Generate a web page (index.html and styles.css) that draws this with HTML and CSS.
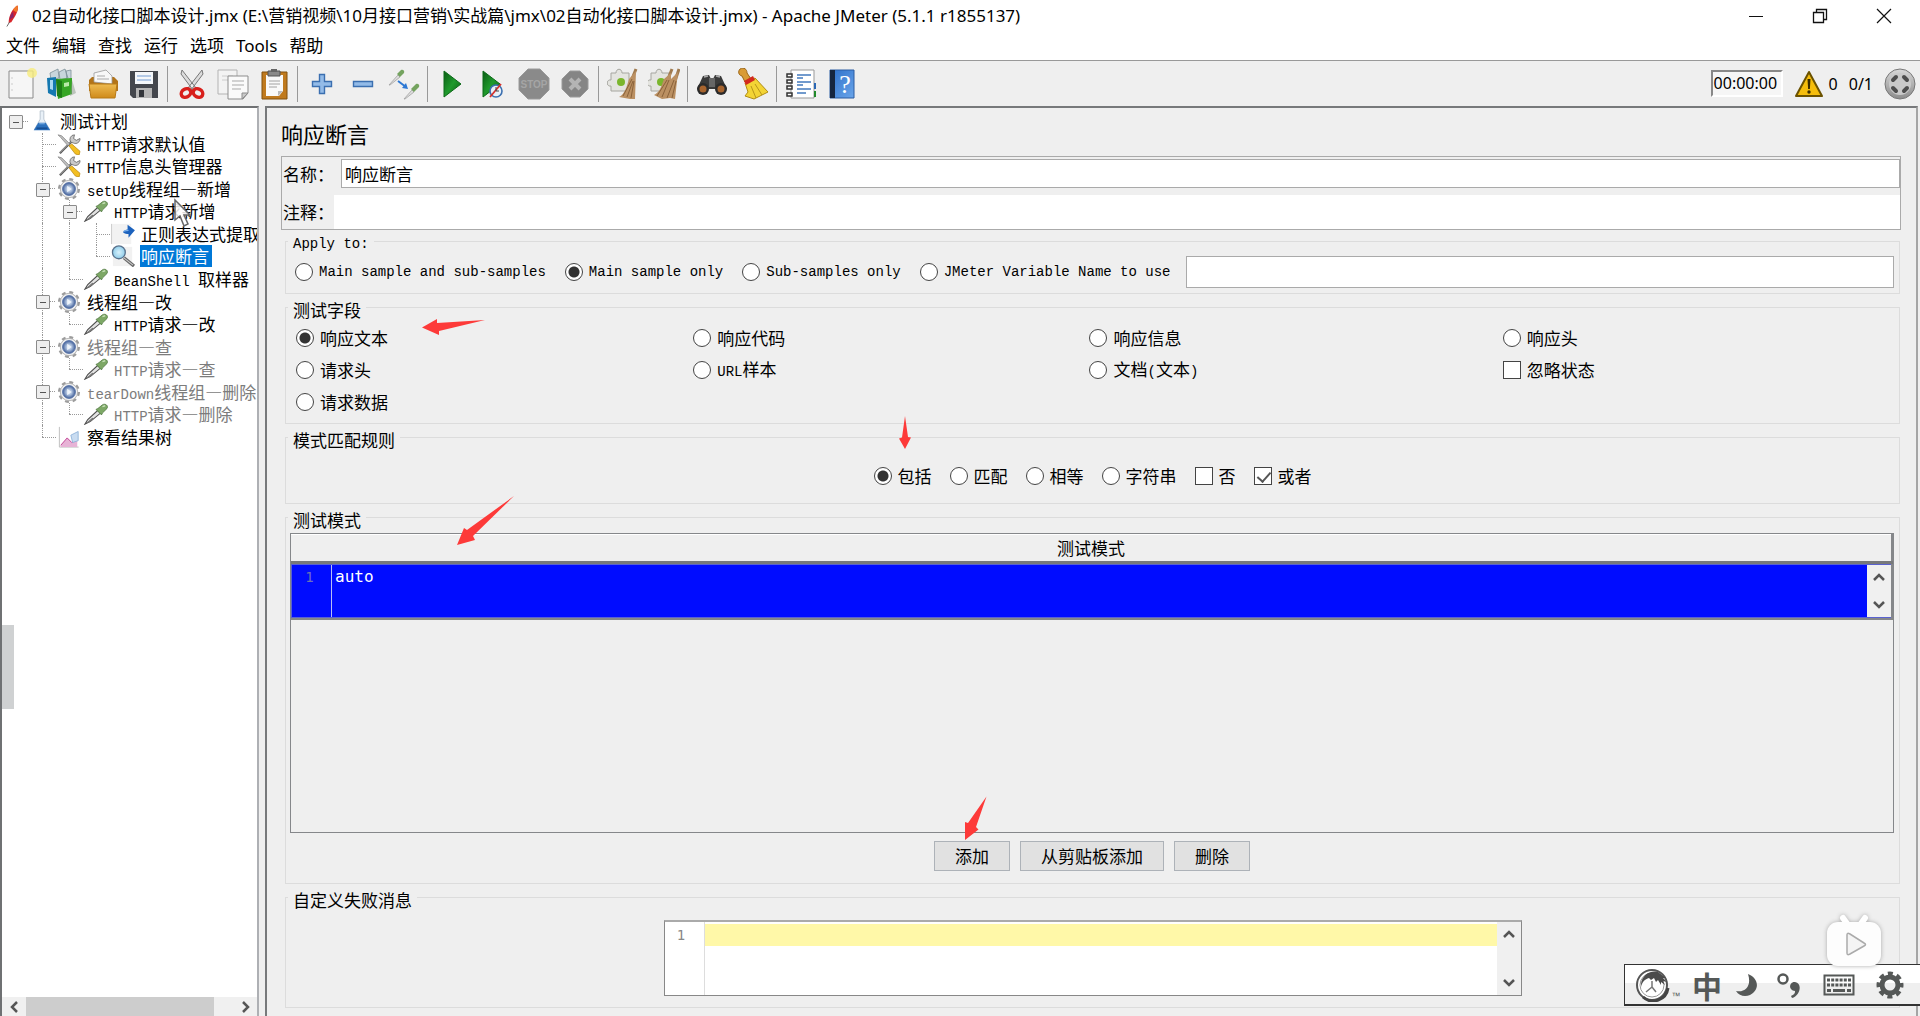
FILE: index.html
```html
<!DOCTYPE html>
<html lang="zh-CN">
<head>
<meta charset="utf-8">
<title>Apache JMeter</title>
<link rel="stylesheet" href="styles.css">
</head>
<body>
<svg class="defs" aria-hidden="true">
  <defs>
    <linearGradient id="gGreen" x1="0" y1="0" x2="1" y2="1"><stop offset="0" stop-color="#0a5c14"/><stop offset=".5" stop-color="#1f9a2c"/><stop offset="1" stop-color="#0b5a12"/></linearGradient>
    <linearGradient id="gFolder" x1="0" y1="0" x2="0" y2="1"><stop offset="0" stop-color="#eebb52"/><stop offset="1" stop-color="#cf8a1a"/></linearGradient>
    <linearGradient id="gBlue" x1="0" y1="0" x2="1" y2="1"><stop offset="0" stop-color="#2c6fc9"/><stop offset="1" stop-color="#6aa5ea"/></linearGradient>
    <linearGradient id="gSteel" x1="0" y1="0" x2="0" y2="1"><stop offset="0" stop-color="#d8d8d8"/><stop offset="1" stop-color="#8c8c8c"/></linearGradient>
    <radialGradient id="gHub"><stop offset="0" stop-color="#dfe9f5"/><stop offset=".45" stop-color="#a9bddb"/><stop offset="1" stop-color="#3e5c96"/></radialGradient>
    <radialGradient id="gLens"><stop offset="0" stop-color="#d8f1fb"/><stop offset="1" stop-color="#8fcdea"/></radialGradient>
    <symbol id="tools" viewBox="0 0 26 24">
      <path d="M3 22L16 9" stroke="#555" stroke-width="2.4"/><path d="M3 21.500L15 9.500" stroke="#bbb" stroke-width="1"/>
      <path d="M15 10a5 5 0 0 1 4-8l-1 4 3 2 4-2a5 5 0 0 1-7 5z" fill="#c9c9c9" stroke="#666" stroke-width=".9"/>
      <path d="M1 2l4 1 9 9-2 2-8-9z" fill="#bdbdbd" stroke="#777" stroke-width=".7"/>
      <path d="M13 14l3-2 9 8-1 4-4-1z" fill="#f3bf22" stroke="#b8860b" stroke-width=".8"/>
    </symbol>
    <symbol id="gear" viewBox="0 0 26 24">
      <circle cx="13" cy="12" r="10" fill="none" stroke="#9c9c9c" stroke-width="4" stroke-dasharray="4 3.850"/>
      <circle cx="13" cy="12" r="9.500" fill="#efefef" stroke="#b0b0b0"/>
      <circle cx="13" cy="12" r="7" fill="url(#gHub)" stroke="#5874a8"/>
      <path d="M11 8.500l5 3.500-5 3.500z" fill="#eef4fb"/>
    </symbol>
    <symbol id="dropper" viewBox="0 0 26 24">
      <path d="M1 23l3-5L15 8l3 3L7 20z" fill="#e3e3e3" stroke="#4e4e4e" stroke-width="1.200"/>
      <path d="M2 22l7-6 2 1-5 4z" fill="#777"/>
      <path d="M13 7l6 6 1-2 5-5c2-3-2-6-5-4l-5 4z" fill="#7da866" stroke="#48713a" stroke-width=".8"/>
      <path d="M20 4l3-1" stroke="#c5dfb6" stroke-width="1.500"/>
    </symbol>
    <symbol id="regex" viewBox="0 0 26 24">
      <path d="M0 1h22v22H0z" fill="#f2f2f2"/><path d="M.5 1v22" stroke="#c9c9c9"/>
      <path d="M13 10c1-2 3-3 5-3V2l8 6-7 8v-4c-2 0-4 0-6-2z" fill="#1c62bd"/><path d="M14 9c2-1 3-1 5-1" stroke="#7bb0ec" stroke-width="1.500" fill="none"/>
    </symbol>
    <symbol id="lens" viewBox="0 0 26 24">
      <path d="M2 2h21v21H2z" fill="#f1f1f1"/><path d="M14 14l11 9" stroke="#666" stroke-width="3.500"/><path d="M14 14l10 8" stroke="#ccc" stroke-width="1.200"/>
      <circle cx="8.500" cy="8" r="7" fill="url(#gLens)" stroke="#58718c" stroke-width="1.400"/>
    </symbol>
    <symbol id="flask" viewBox="0 0 26 24">
      <path d="M11 1h4v9l6 11H5l6-11z" fill="#e9f1f8" stroke="#b7c3cf"/>
      <path d="M9 14h8l5 8H4z" fill="#2e72bd"/><path d="M7 20h12" stroke="#174f94" stroke-width="2"/><path d="M10 15h6" stroke="#8dbbea"/>
    </symbol>
    <symbol id="chart" viewBox="0 0 26 24">
      <path d="M2.500 1v22h21" fill="none" stroke="#bbb"/><path d="M4 21l7-8 5 5 6-4v9H4z" fill="#e7b3d6"/><path d="M4 21l7-8 5 5 6-3" fill="none" stroke="#c03a8f"/>
      <path d="M15 10l8-4v10l-6 2z" fill="#c9dcf1" stroke="#90b3da"/>
    </symbol>
  </defs>
</svg>

<header class="titlebar">
  <svg class="feather" viewBox="0 0 16 26"><path d="M3 21C3 12 8 4 13 1c2 3 0 9-7 19z" fill="#d8262b"/><path d="M8 6c2-3 4-5 5-5 1 2 1 4-1 8z" fill="#f07a2a"/><path d="M4 17c0-3 2-7 4-9l1 6z" fill="#8c2468"/><path d="M1 25l3-5" stroke="#555"/></svg>
  <h1 class="titlebar-text">02自动化接口脚本设计.jmx (E:\营销视频\10月接口营销\实战篇\jmx\02自动化接口脚本设计.jmx) - Apache JMeter (5.1.1 r1855137)</h1>
  <div class="window-controls">
    <button type="button" aria-label="最小化"><svg width="16" height="16" viewBox="0 0 16 16"><path d="M1 8.500h14" stroke="#111"/></svg></button>
    <button type="button" aria-label="还原"><svg width="16" height="16" viewBox="0 0 16 16" fill="none" stroke="#111" stroke-width="1.300"><path d="M1.500 4.500h10v10h-10z"/><path d="M4.500 4.500v-3h10v10h-3"/></svg></button>
    <button type="button" aria-label="关闭"><svg width="16" height="16" viewBox="0 0 16 16"><path d="M1 1l14 14M15 1L1 15" stroke="#111" stroke-width="1.200"/></svg></button>
  </div>
</header>

<nav class="menubar">
  <a href="#">文件</a><a href="#">编辑</a><a href="#">查找</a><a href="#">运行</a><a href="#">选项</a><a href="#">Tools</a><a href="#">帮助</a>
</nav>

<div class="toolbar">
  <button type="button" aria-label="新建"><svg width="32" height="32" viewBox="0 0 32 32"><path d="M4 3h24v27H4z" fill="#f6f6f6" stroke="#8a8a8a"/><path d="M7 9v2M7 15v2M7 21v2" stroke="#ccc"/><circle cx="27" cy="5" r="5" fill="#f7ec7d" opacity=".8"/></svg></button>
  <button type="button" aria-label="模板"><svg width="32" height="32" viewBox="0 0 32 32"><path d="M4 5l8-4 1 9-8 2zM13 4l6-3 3 9-8 2zM20 3l5-1v9l-4 1z" fill="#c8d6dc" stroke="#7b8f98" stroke-width=".8"/><path d="M1 10l9-1v20l-8-4z" fill="#1478b0"/><path d="M4 12l3 0v10l-3-1z" fill="#a7d8f2"/><path d="M10 11l16-1v16l-14 5z" fill="#36a625"/><path d="M10 11l6 2v17l-5-2z" fill="#1e7f16"/><path d="M26 12l4 13-6 3z" fill="#8a9a8a" opacity=".5"/><path d="M18 15l5-1v4l-5 1z" fill="#b9eaa9"/></svg></button>
  <button type="button" aria-label="打开"><svg width="32" height="32" viewBox="0 0 32 32"><path d="M2 12l3-3h22l4 4v10H2z" fill="#b2741a"/><path d="M7 14V5l12-3 6 6v8z" fill="#f8f8f8" stroke="#999" stroke-width=".8"/><path d="M10 8h8M10 11h12" stroke="#aaa"/><path d="M2 16h28l-2 14H4z" fill="url(#gFolder)" stroke="#b87a17"/></svg></button>
  <button type="button" aria-label="保存"><svg width="32" height="32" viewBox="0 0 32 32"><path d="M2 3h28v27H5l-3-3z" fill="#44474d"/><path d="M7 4h18v12H7z" fill="#f4f7fa"/><path d="M9 8h14M9 12h14" stroke="#9dbbe0" stroke-width="1.500"/><path d="M8 20h16v10H8z" fill="#b5b5b5"/><path d="M11 22h5v7h-5z" fill="#33363b"/></svg></button>
  <span class="sep"></span>
  <button type="button" aria-label="剪切"><svg width="32" height="32" viewBox="0 0 32 32"><path d="M6 2l14 18-3 2L5 6zM26 2L12 20l3 2L27 6z" fill="#dcdcdc" stroke="#777"/><g fill="none" stroke="#d8201c" stroke-width="3.500"><ellipse cx="10" cy="25" rx="5" ry="4" transform="rotate(-30 10 25)"/><ellipse cx="22" cy="25" rx="5" ry="4" transform="rotate(30 22 25)"/></g></svg></button>
  <button type="button" aria-label="复制"><svg width="32" height="32" viewBox="0 0 32 32"><path d="M1 2h19v24H1z" fill="#f3f3f3" stroke="#b3b3b3"/><path d="M5 8h11M5 12h11" stroke="#ccc"/><path d="M11 8h20v17l-5 6H11z" fill="#fafafa" stroke="#8d8d8d"/><path d="M15 13h12M15 17h12M15 21h9" stroke="#a9a9a9"/><path d="M25 31v-6h6z" fill="#c9c9c9" stroke="#8d8d8d"/></svg></button>
  <button type="button" aria-label="粘贴"><svg width="32" height="32" viewBox="0 0 32 32"><path d="M4 4h25v27H4z" fill="#c07a1e" stroke="#81500f"/><path d="M8 7h17v16l-4 5H8z" fill="#f9f9f9"/><path d="M10 3h12v5H10z" fill="#8a8a8a" stroke="#555"/><path d="M13 1h6v3h-6z" fill="#666"/><path d="M11 13h11M11 16h11M11 19h8" stroke="#a2a2a2"/><path d="M20 28v-5h5z" fill="#bbb"/></svg></button>
  <span class="sep"></span>
  <button type="button" aria-label="展开"><svg width="32" height="32" viewBox="0 0 32 32"><path d="M13.500 6.500h5v7h7v5h-7v7h-5v-7h-7v-5h7z" fill="#93bbe8" stroke="#3b6fb0" stroke-width="1.400"/></svg></button>
  <button type="button" aria-label="折叠"><svg width="32" height="32" viewBox="0 0 32 32"><path d="M6.500 13.500h19v5h-19z" fill="#93bbe8" stroke="#3b6fb0" stroke-width="1.400"/></svg></button>
  <button type="button" aria-label="切换"><svg width="32" height="32" viewBox="0 0 32 32"><path d="M1 17l9-10 2 2-10 8z" fill="#ddd" stroke="#999" stroke-width=".7"/><path d="M9 6l4-4c2-1 4 1 3 3l-4 4z" fill="#74a35f"/><path d="M16 31l8-9 2 2-9 7z" fill="#ddd" stroke="#999" stroke-width=".7"/><path d="M23 21l5-5c2-1 4 1 3 3l-5 5z" fill="#74a35f"/><path d="M10 13l8 6" stroke="#2c78d4" stroke-width="2"/><path d="M20 21l-6-1 4-5z" fill="#2c78d4"/></svg></button>
  <span class="sep"></span>
  <button type="button" aria-label="启动"><svg width="32" height="32" viewBox="0 0 32 32"><path d="M8 3l17 13L8 29z" fill="url(#gGreen)" stroke="#0c6a18"/></svg></button>
  <button type="button" aria-label="不停顿启动"><svg width="32" height="32" viewBox="0 0 32 32"><path d="M6 3l17 13L6 29z" fill="url(#gGreen)" stroke="#0c6a18"/><circle cx="19" cy="23" r="6" fill="#e8f0f8" stroke="#3b6fb0" stroke-width="1.600"/><path d="M13 29l11-13" stroke="#d6322c" stroke-width="1.800"/><path d="M19 19v4h3" stroke="#444" fill="none"/></svg></button>
  <button type="button" aria-label="停止" disabled><svg width="32" height="32" viewBox="0 0 32 32"><path d="M10 1h12l9 9v12l-9 9H10l-9-9V10z" fill="#8a8a8a" stroke="#9a9a9a"/><text class="stop-text" x="16" y="20" text-anchor="middle">STOP</text></svg></button>
  <button type="button" aria-label="关闭" disabled><svg width="32" height="32" viewBox="0 0 32 32"><path d="M11 3h10l8 8v10l-8 8H11l-8-8V11z" fill="#858585" stroke="#9a9a9a"/><path d="M11 11l10 10M21 11L11 21" stroke="#b4b4b4" stroke-width="4"/></svg></button>
  <span class="sep"></span>
  <button type="button" aria-label="清除"><svg width="32" height="32" viewBox="0 0 32 32"><path d="M4 5h5c0-5 6-5 6 0h7v18H4v-5c-5 1-5-7 0-6z" fill="#e4e4e0" stroke="#a6a6a0"/><circle cx="14" cy="14" r="4" fill="#7bb62d"/><path d="M29 1l-6 15" stroke="#a07a4e" stroke-width="3"/><path d="M22 11l7-8-1 28-5 0-11-2c6-3 8-11 10-18z" fill="#bb9062"/><path d="M16 28l9-17M20 29l6-16M24 30l3-17" stroke="#8a623a"/></svg></button>
  <button type="button" aria-label="清除全部"><svg width="32" height="32" viewBox="0 0 32 32"><path d="M3 5h5c0-5 6-5 6 0h7v18H3v-5c-5 1-5-7 0-6z" fill="#e4e4e0" stroke="#a6a6a0"/><circle cx="13" cy="14" r="4" fill="#7bb62d"/><path d="M24 1l-6 15M31 1l-5 15" stroke="#a07a4e" stroke-width="3"/><path d="M16 11l7-6 0 6 7-7-3 27-5-1-8 1-8-4c6-3 7-8 10-16z" fill="#bb9062"/><path d="M9 28l10-16M14 29l7-17M19 30l7-18M24 30l4-17" stroke="#8a623a"/></svg></button>
  <span class="sep"></span>
  <button type="button" aria-label="查找"><svg width="32" height="32" viewBox="0 0 32 32"><path d="M1 21l6-13 6-1 2 4h2l2-4 6 1 6 13z" fill="#3a3a3a"/><path d="M13 10h6v9h-6z" fill="#666"/><circle cx="7" cy="21" r="6" fill="#2b2b2b"/><circle cx="25" cy="21" r="6" fill="#2b2b2b"/><circle cx="7" cy="21" r="3.500" fill="#a7642e"/><circle cx="25" cy="21" r="3.500" fill="#a7642e"/><path d="M8 9l4-1M20 8l4 1" stroke="#aaa" stroke-width="1.500"/></svg></button>
  <button type="button" aria-label="重置查找"><svg width="32" height="32" viewBox="0 0 32 32"><path d="M3 1c4-2 7 0 7 4l4 6-6 3-3-6c-4-1-4-5-2-7z" fill="#d99b35" stroke="#9b6516"/><path d="M8 15l10-5 13 14-14 7-9-3 3-4z" fill="#f3d435" stroke="#b08d14"/><path d="M7 13l9-5 2 4-9 5z" fill="#d22a1e"/><path d="M14 18l5 12M18 16l7 11" stroke="#b8961b"/></svg></button>
  <span class="sep"></span>
  <button type="button" aria-label="函数助手"><svg width="32" height="32" viewBox="0 0 32 32"><path d="M6 2h23v28H6z" fill="#fff" stroke="#999"/><path d="M29 15h2v6h-2z" fill="#2b68b5"/><path d="M29 23h2v6h-2z" fill="#228a2b"/><g fill="#fff" stroke="#333" stroke-width="1.500"><path d="M2 6h5v3H2zM2 12h5v3H2zM2 18h5v3H2zM2 25h5v3H2z"/></g><path d="M12 7h14M12 10h6M12 14h14M12 17h6M12 21h14M12 25h9" stroke="#4379bd" stroke-width="1.500"/></svg></button>
  <button type="button" aria-label="帮助"><svg width="32" height="32" viewBox="0 0 32 32"><path d="M4 2h24v28H4z" fill="url(#gBlue)" stroke="#2b5ca3"/><path d="M4 2h5v28H4z" fill="#16263f"/><text class="help-text" x="19" y="25" text-anchor="middle">?</text></svg></button>

  <div class="status">
    <output class="timer">00:00:00</output>
    <svg class="warn" width="30" height="28" viewBox="0 0 30 28"><path d="M15 2l13 24H2z" fill="#f5bd0c" stroke="#6b5200" stroke-width="2" stroke-linejoin="round"/><path d="M13.500 9h3l-.6 10h-1.800z" fill="#3a2c00"/><circle cx="15" cy="22" r="1.700" fill="#3a2c00"/></svg>
    <span>0</span>
    <span>0/1</span>
    <svg width="32" height="32" viewBox="0 0 32 32"><circle cx="16" cy="16" r="15" fill="url(#gSteel)" stroke="#777"/><circle cx="16" cy="16" r="11" fill="#c9c9c9"/><path d="M9 12l3-3M20 9l3 3M23 20l-3 3M12 23l-3-3" stroke="#4d4d4d" stroke-width="4" stroke-linecap="round"/></svg>
  </div>
</div>

<main class="workspace">
  <aside class="tree-pane">
    <ul class="tree">
      <li><i class="exp root"></i><svg><use href="#flask"/></svg><span>测试计划</span></li>
      <li><i></i><i class="tee"></i><svg><use href="#tools"/></svg><span><b>HTTP</b>请求默认值</span></li>
      <li><i></i><i class="tee"></i><svg><use href="#tools"/></svg><span><b>HTTP</b>信息头管理器</span></li>
      <li><i></i><i class="exp bar"></i><svg><use href="#gear"/></svg><span><b>setUp</b>线程组—新增</span></li>
      <li><i></i><i class="bar"></i><i class="exp bar"></i><svg><use href="#dropper"/></svg><span><b>HTTP</b>请求新增</span></li>
      <li><i></i><i class="bar"></i><i class="bar"></i><i class="tee"></i><svg><use href="#regex"/></svg><span>正则表达式提取</span></li>
      <li><i></i><i class="bar"></i><i class="bar"></i><i class="end"></i><svg><use href="#lens"/></svg><span class="selected">响应断言</span></li>
      <li><i></i><i class="bar"></i><i class="end"></i><svg><use href="#dropper"/></svg><span><b>BeanShell </b>取样器</span></li>
      <li><i></i><i class="exp bar"></i><svg><use href="#gear"/></svg><span>线程组—改</span></li>
      <li><i></i><i class="bar"></i><i class="end"></i><svg><use href="#dropper"/></svg><span><b>HTTP</b>请求—改</span></li>
      <li class="off"><i></i><i class="exp bar"></i><svg><use href="#gear"/></svg><span>线程组—查</span></li>
      <li class="off"><i></i><i class="bar"></i><i class="end"></i><svg><use href="#dropper"/></svg><span><b>HTTP</b>请求—查</span></li>
      <li class="off"><i></i><i class="exp bar"></i><svg><use href="#gear"/></svg><span><b>tearDown</b>线程组—删除</span></li>
      <li class="off"><i></i><i class="bar"></i><i class="end"></i><svg><use href="#dropper"/></svg><span><b>HTTP</b>请求—删除</span></li>
      <li><i></i><i class="end"></i><svg><use href="#chart"/></svg><span>察看结果树</span></li>
    </ul>
    <div class="hscroll">
      <button type="button" aria-label="向左"><svg width="9" height="12" viewBox="0 0 9 12"><path d="M7 1L2 6l5 5" fill="none" stroke="#555" stroke-width="2.500"/></svg></button>
      <div class="hscroll-track"><div class="hscroll-thumb"></div></div>
      <button type="button" aria-label="向右"><svg width="9" height="12" viewBox="0 0 9 12"><path d="M2 1l5 5-5 5" fill="none" stroke="#555" stroke-width="2.500"/></svg></button>
    </div>
    <div class="edge-handle"></div>
  </aside>

  <section class="editor-pane">
    <h2>响应断言</h2>
    <div class="name-box">
      <div class="name-row"><label for="name">名称：</label><input id="name" class="name-input" type="text" value="响应断言"></div>
      <div class="comment-row"><label for="comment">注释：</label><input id="comment" type="text"></div>
    </div>

    <fieldset>
      <legend class="latin">Apply to:</legend>
      <div class="apply latin">
        <label><input type="radio" name="apply">Main sample and sub-samples</label>
        <label><input type="radio" name="apply" checked>Main sample only</label>
        <label><input type="radio" name="apply">Sub-samples only</label>
        <label><input type="radio" name="apply">JMeter Variable Name to use</label>
        <input type="text" class="var-input" aria-label="JMeter Variable Name">
      </div>
    </fieldset>

    <fieldset>
      <legend>测试字段</legend>
      <div class="fields">
        <label><input type="radio" name="field" checked>响应文本</label>
        <label><input type="radio" name="field">响应代码</label>
        <label><input type="radio" name="field">响应信息</label>
        <label><input type="radio" name="field">响应头</label>
        <label><input type="radio" name="field">请求头</label>
        <label><input type="radio" name="field"><span><b>URL</b>样本</span></label>
        <label><input type="radio" name="field"><span>文档<b>(</b>文本<b>)</b></span></label>
        <label><input type="checkbox">忽略状态</label>
        <label><input type="radio" name="field">请求数据</label>
      </div>
    </fieldset>

    <fieldset>
      <legend>模式匹配规则</legend>
      <div class="rules">
        <label><input type="radio" name="rule" checked>包括</label>
        <label><input type="radio" name="rule">匹配</label>
        <label><input type="radio" name="rule">相等</label>
        <label><input type="radio" name="rule">字符串</label>
        <label><input type="checkbox">否</label>
        <label><input type="checkbox" checked>或者</label>
      </div>
    </fieldset>

    <fieldset class="grow">
      <legend>测试模式</legend>
      <div class="patterns">
        <div class="table-wrap">
          <table>
            <thead><tr><th>测试模式</th></tr></thead>
            <tbody><tr><td>
              <div class="code selected-code">
                <span class="gutter">1</span>
                <textarea aria-label="测试模式 1">auto</textarea>
                <div class="vscroll"><button type="button" aria-label="向上"><svg width="12" height="9" viewBox="0 0 12 9"><path d="M1 7l5-5 5 5" fill="none" stroke="#555" stroke-width="2.500"/></svg></button><button type="button" aria-label="向下"><svg width="12" height="9" viewBox="0 0 12 9"><path d="M1 2l5 5 5-5" fill="none" stroke="#555" stroke-width="2.500"/></svg></button></div>
              </div>
            </td></tr></tbody>
          </table>
        </div>
        <div class="actions">
          <button type="button">添加</button>
          <button type="button">从剪贴板添加</button>
          <button type="button">删除</button>
        </div>
      </div>
    </fieldset>

    <fieldset>
      <legend>自定义失败消息</legend>
      <div class="message">
        <div class="code message-code">
          <span class="gutter">1</span>
          <textarea aria-label="自定义失败消息"></textarea>
          <div class="vscroll"><button type="button" aria-label="向上"><svg width="12" height="9" viewBox="0 0 12 9"><path d="M1 7l5-5 5 5" fill="none" stroke="#555" stroke-width="2.500"/></svg></button><button type="button" aria-label="向下"><svg width="12" height="9" viewBox="0 0 12 9"><path d="M1 2l5 5 5-5" fill="none" stroke="#555" stroke-width="2.500"/></svg></button></div>
        </div>
      </div>
    </fieldset>
  </section>
</main>

<svg class="annotations" width="1000" height="860" viewBox="0 0 1000 860" aria-hidden="true">
  <g fill="#fd3a39">
    <path d="M422 327.500L437 319v4l48-3-46 11v4z"/>
    <path d="M905 416l3 21 3 .5-6 11.500-6-10.500 3-1z"/>
    <path d="M514 496l-41 40 2 4-18 5 7-17 3 2z"/>
    <path d="M986.500 796.500L976 827l2.500 2.500L965 840v-18l3 1z"/>
  </g>
  <path d="M175 200v20l5-4 4 10 4-2-4-9h6z" fill="#fff" fill-opacity=".85" stroke="#666" stroke-width="1.500"/>
</svg>

<div class="ime">
  <button type="button" class="ime-logo" aria-label="输入法"><svg width="38" height="34" viewBox="0 0 38 34"><circle cx="18" cy="17" r="15" fill="#fff" stroke="#555" stroke-width="2"/><circle cx="18" cy="17" r="12" fill="none" stroke="#999"/><path d="M9 29a15 15 0 0 0 25-9" fill="none" stroke="#444" stroke-width="3"/><path d="M7 16C8 8 15 2 24 4l8 6-3 0 4 4-4-1 2 4-4-3 0 3-3-5-2 2-2-4-3 2-2-2c-4 1-7 4-8 9z" fill="#4b4b4b"/><path d="M12 24l6-5v-6M18 19l4 5" fill="none" stroke="#777" stroke-width="1.500"/></svg><small>™</small></button>
  <button type="button" class="ime-lang">中</button>
  <button type="button" class="ime-moon" aria-label="半角"><svg width="24" height="24" viewBox="0 0 24 24"><path d="M13 1c11 4 12 16 2 21-5 2-11 1-14-4 9 2 16-5 12-17z" fill="#555857"/></svg></button>
  <button type="button" class="ime-punct" aria-label="标点"><svg width="26" height="26" viewBox="0 0 26 26"><circle cx="7" cy="7" r="4.500" fill="none" stroke="#555857" stroke-width="2.500"/><path d="M15 24c4-2 4-3 4-5-8-1-5-10 0-9 8 1 5 14-3 16z" fill="#555857"/></svg></button>
  <button type="button" class="ime-keys" aria-label="软键盘"><svg width="32" height="22" viewBox="0 0 32 22"><path d="M1.500 1.500h29v19h-29z" fill="none" stroke="#555857" stroke-width="2"/><path d="M4 6h24M4 11h24" stroke="#555857" stroke-width="3" stroke-dasharray="3 1.200"/><path d="M4 16.500h4M10 16.500h12M24 16.500h4" stroke="#555857" stroke-width="3"/></svg></button>
  <button type="button" class="ime-gear" aria-label="设置"><svg width="28" height="28" viewBox="0 0 28 28"><circle cx="14" cy="14" r="8" fill="none" stroke="#555857" stroke-width="5"/><circle cx="14" cy="14" r="11.500" fill="none" stroke="#555857" stroke-width="4" stroke-dasharray="5 4.030" stroke-dashoffset="2.500"/></svg></button>
</div>
<svg class="player" width="64" height="62" viewBox="0 0 64 62" aria-hidden="true"><g stroke="#fff" stroke-width="6" stroke-linecap="round"><path d="M21 8l5 7M43 8l-5 7"/></g><rect x="5" y="12" width="54" height="44" rx="11" fill="#fdfdfd"/><path d="M25 25v18c0 2 1 2 3 1l14-8c2-1 2-2 0-3l-14-9c-2-1-3-1-3 1z" fill="#f4f4f4" stroke="#aaa" stroke-width="1.500"/></svg>
</body>
</html>
```

FILE: styles.css
```css
* { box-sizing: border-box; }
body {
  margin: 0;
  min-height: 100vh;
  display: flex;
  flex-direction: column;
  position: relative;
  overflow: hidden;
  background: #fff;
  color: #000;
  font: 17px/22px "Noto Sans CJK SC", sans-serif;
}
button { margin: 0; padding: 0; border: 0; background: none; font: inherit; color: inherit; }
button svg { display: block; }
b { font: 14px/20px "Liberation Mono", monospace; white-space: pre; }
.latin { font: 14px/20px "Liberation Mono", monospace; }
.defs { position: absolute; width: 0; height: 0; }

/* Title bar and menu */
.titlebar { display: flex; align-items: center; height: 32px; padding: 0 20px 0 6px; }
.feather { width: 14px; height: 24px; margin-right: 12px; }
.titlebar-text { margin: 0; flex: 1; font: 17px/24px "Noto Sans", "Noto Sans CJK SC", sans-serif; white-space: nowrap; }
.window-controls { display: flex; gap: 48px; padding-right: 8px; }
.menubar { display: flex; align-items: center; gap: 12px; height: 28px; padding: 0 6px; font-family: "Noto Sans", "Noto Sans CJK SC", sans-serif; }
.menubar a { color: inherit; text-decoration: none; }

/* Toolbar */
.toolbar { display: flex; align-items: center; height: 46px; border-top: 1px solid #999; background: #efefef; }
.toolbar > button { width: 41px; height: 40px; display: flex; align-items: center; justify-content: center; flex: none; }
.sep { flex: none; width: 7px; height: 36px; background: linear-gradient(#999, #999) center / 1px 100% no-repeat; }
.stop-text { font: bold 10px "Liberation Sans", sans-serif; fill: #a5a5a5; }
.help-text { font: 26px "Liberation Serif", serif; fill: #fff; }
.status { display: flex; align-items: center; margin-left: auto; padding-right: 4px; gap: 11px; font: 16px/22px "Noto Sans", sans-serif; }
.timer { height: 27px; width: 72px; line-height: 22px; padding-left: 1px; border: 2px solid #fff; border-top-color: #888; border-left-color: #888; background: #f6f6f6; white-space: nowrap; }
.warn { margin-right: -6px; }

/* Work area */
.workspace { flex: 1; display: flex; gap: 6px; background: #efefef; padding-right: 2px; }
.tree-pane { position: relative; flex: none; width: 259px; display: flex; flex-direction: column; overflow: hidden; background: #fff; border: solid #6f7173; border-width: 2px 2px 0 2px; border-right-color: #aeb0b4; }
.tree { list-style: none; margin: 0; padding: 2px 0 0; height: 340px; display: grid; grid-auto-rows: 1fr; }
.tree li { display: flex; align-items: center; white-space: nowrap; min-height: 0; }
.tree li > svg { flex: none; width: 26px; height: 22px; margin: 0 4px 0 0; }
.tree li > span { padding: 0 1px; line-height: 22px; }
.tree b { line-height: 16px; }
.tree li > .selected { background: #0078d7; color: #fff; padding-right: 3px; }
.off { color: #7c7c7c; }
.tree i { position: relative; flex: none; width: 27px; align-self: stretch; }
.tree i::before { content: ""; position: absolute; left: 13px; top: 0; bottom: 0; }
.tree .bar::before, .tree .tee::before { border-left: 1px dotted #999; }
.tree .end::before { border-left: 1px dotted #999; bottom: 50%; }
.tree .tee::after, .tree .end::after { content: ""; position: absolute; left: 13px; right: 0; top: 50%; border-top: 1px dotted #999; }
.tree .exp { background: repeating-linear-gradient(90deg, #999 0 1px, transparent 1px 2px) right center / 8px 1px no-repeat; }
.tree .exp::after { content: ""; position: absolute; left: 7px; top: 5px; width: 12px; height: 12px; border: 1px solid #8b8b8b; border-radius: 1px; background: linear-gradient(#555, #555) center / 6px 1px no-repeat, #eee; }
.hscroll { display: flex; align-items: center; height: 19px; margin-top: auto; background: #f0f0f0; }
.hscroll button { flex: none; width: 24px; display: flex; justify-content: center; }
.hscroll-track { flex: 1; align-self: stretch; }
.hscroll-thumb { width: 91%; height: 100%; background: #cdcdcd; }
.edge-handle { position: absolute; left: 0; top: 517px; width: 12px; height: 84px; background: #cfd1d2; }

.editor-pane { flex: 1; min-width: 0; display: flex; flex-direction: column; gap: 2px; padding: 11px 15px 8px 14px; border: solid #77797b; border-width: 2px 2px 0 2px; border-right-color: #a5a5a5; }
h2 { margin: 0 0 7px; font: 22px/28px "Noto Sans CJK SC", sans-serif; }
.name-box { border: 1px solid #aaa; height: 74px; padding-top: 2px; display: flex; flex-direction: column; margin-bottom: -2px; }
.name-row, .comment-row { display: flex; align-items: center; }
.name-row { height: 29px; gap: 7px; margin-bottom: 7px; }
.comment-row { flex: 1; }
.name-box label { width: 52px; padding-left: 1px; white-space: nowrap; }
input[type="text"] { flex: 1; min-width: 0; height: 100%; margin: 0; padding: 0 3px; border: 0; border-radius: 0; background: #fff; font: 17px/22px "Noto Sans CJK SC", sans-serif; color: #000; }
input.name-input, input.var-input { border: 1px solid #aaa; }

fieldset { margin: 0 1px 0 4px; padding: 0; border: 1px solid #dcdcdc; min-width: 0; }
legend { margin-left: 2px; padding: 6px 5px 0; line-height: 16px; }
legend.latin { line-height: 16px; }
label { display: flex; align-items: center; white-space: nowrap; }
input[type="radio"], input[type="checkbox"] { appearance: none; flex: none; width: 18px; height: 18px; margin: 0 6px 0 0; border: 1px solid #444; background: #fff; }
input[type="radio"] { border-radius: 50%; }
input[type="radio"]:checked { background: radial-gradient(circle, #333 0 5px, #fff 6px); }
input[type="checkbox"] { position: relative; }
input[type="checkbox"]:checked::after { content: ""; position: absolute; left: 5px; top: 1px; width: 6px; height: 11px; border: solid #555; border-width: 0 2px 2px 0; transform: rotate(42deg); }
.apply { display: flex; align-items: center; gap: 19px; height: 41px; padding: 4px 5px 5px 9px; }
.apply .var-input { margin-left: -4px; }
.fields { display: grid; grid-template-columns: 397fr 396fr 413fr 396fr; grid-auto-rows: 32px; padding: 4px 0 5px 10px; }
.rules { display: flex; justify-content: center; align-items: center; gap: 18px; height: 55px; }

.grow { flex: 1; display: flex; flex-direction: column; }
.patterns { flex: 1; display: flex; flex-direction: column; padding: 5px 5px 12px 4px; }
.table-wrap { flex: 1; border: 1px solid #85878a; }
table { width: 100%; border-collapse: collapse; }
th { height: 28px; padding: 0; line-height: 20px; font-weight: normal; border-top: 1px solid #fff; border-right: 2px solid #85878a; border-bottom: 3px solid #77797b; }
td { padding: 0; border-right: 2px solid #85878a; border-bottom: 2px solid #85878a; }
.code { display: flex; }
.code .gutter { flex: none; text-align: center; font: 14px/22px "DejaVu Sans Mono", monospace; color: #888; }
.code textarea { flex: 1; resize: none; margin: 0; border: 0; padding: 0 3px; outline: 0; overflow: hidden; font: 16px/22px "DejaVu Sans Mono", monospace; }
.vscroll { flex: none; width: 24px; display: flex; flex-direction: column; justify-content: space-between; align-items: center; padding: 8px 0; background: #f0f0f0; }
.selected-code { height: 54px; background: #000cff; border: 1px solid #5a62d0; border-right: 0; }
.selected-code .gutter { width: 40px; padding: 1px 4px 0 0; border-right: 1px solid #b9bdf5; color: #6c73b8; }
.selected-code textarea { padding-top: 1px; background: #000cff; color: #fff; }
.actions { display: flex; justify-content: center; gap: 10px; padding-top: 8px; }
.actions button { height: 30px; padding: 0 20px; border: 1px solid #adb2b8; background: #e1e1e1; line-height: 26px; }
.message { display: flex; justify-content: center; padding: 12px 0 11px; }
.message-code { flex: 0 1 858px; height: 76px; border: 1px solid #888; border-top: 2px solid #aaa; background: #fff; }
.message-code .gutter { width: 40px; padding: 2px 6px 0 0; border-right: 1px solid #ddd; }
.message-code textarea { background: linear-gradient(#fff8a8, #fff8a8) 0 2px / 100% 22px no-repeat, #fff; }

/* Floating layers */
.annotations { position: absolute; left: 0; top: 0; pointer-events: none; }
.ime { position: absolute; right: 0; bottom: 10px; width: 296px; height: 42px; display: flex; align-items: center; padding-left: 2px; border: solid #333; border-width: 1px 0 2px 1px; background: linear-gradient(#fff 0 46%, #efefef 47%); color: #555857; }
.ime button { flex: none; display: flex; justify-content: center; align-items: center; width: 40px; height: 100%; }
.ime .ime-logo { width: 60px; align-items: flex-end; padding-bottom: 2px; }
.ime-logo small { font: 9px/12px "Liberation Sans", sans-serif; }
.ime .ime-lang { font: bold 30px/36px "Noto Sans CJK SC", sans-serif; }
.ime .ime-punct { width: 44px; }
.ime .ime-keys { width: 56px; }
.ime .ime-gear { width: 46px; }
.player { position: absolute; right: 34px; bottom: 44px; filter: drop-shadow(0 0 2px #aaa); }
```
